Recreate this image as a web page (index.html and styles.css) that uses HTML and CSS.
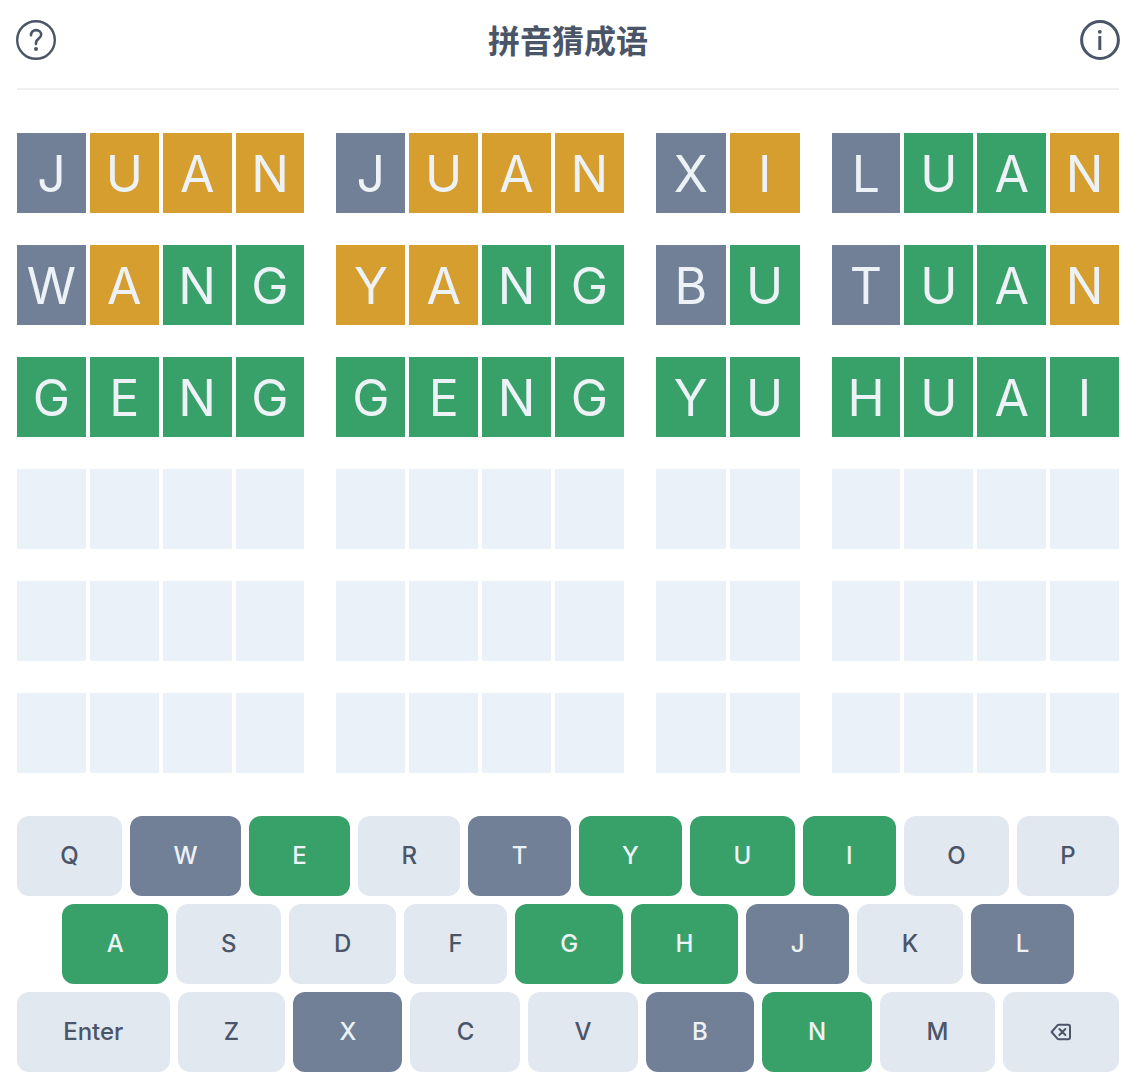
FILE: index.html
```html
<!DOCTYPE html>
<html lang="zh-CN">
<head>
<meta charset="utf-8">
<meta name="viewport" content="width=device-width, initial-scale=1">
<title>拼音猜成语</title>
<link rel="stylesheet" href="styles.css">
</head>
<body>
<header class="header">
  <button class="icon-button" type="button" aria-label="帮助">
    <svg class="icon" viewBox="0 0 40 40" fill="none" stroke="currentColor" stroke-width="2.4" stroke-linecap="round">
      <circle cx="20" cy="20" r="18.8"/>
      <path stroke-width="2.6" d="M15 15.2C15 12 17.200 10.100 20.100 10.100C23 10.100 25.200 12 25.200 14.600C25.200 16.700 24 17.800 22.400 18.900C20.800 20.100 20 21 20 22.700V24"/>
      <circle cx="20" cy="29" r="2" fill="currentColor" stroke="none"/>
    </svg>
  </button>
  <h1 class="title">拼音猜成语</h1>
  <button class="icon-button" type="button" aria-label="关于">
    <svg class="icon" viewBox="0 0 40 40" fill="none" stroke="currentColor" stroke-width="3">
      <circle cx="20" cy="20" r="18.4"/>
      <path d="M19.8 16V30"/>
      <circle cx="19.8" cy="11.8" r="1.9" fill="currentColor" stroke="none"/>
    </svg>
  </button>
</header>
<main class="game">
  <section class="board" aria-label="猜测">
    <div class="guess">
      <div class="word"><span class="tile absent">J</span><span class="tile present">U</span><span class="tile present">A</span><span class="tile present">N</span></div>
      <div class="word"><span class="tile absent">J</span><span class="tile present">U</span><span class="tile present">A</span><span class="tile present">N</span></div>
      <div class="word"><span class="tile absent">X</span><span class="tile present">I</span></div>
      <div class="word"><span class="tile absent">L</span><span class="tile correct">U</span><span class="tile correct">A</span><span class="tile present">N</span></div>
    </div>
    <div class="guess">
      <div class="word"><span class="tile absent">W</span><span class="tile present">A</span><span class="tile correct">N</span><span class="tile correct">G</span></div>
      <div class="word"><span class="tile present">Y</span><span class="tile present">A</span><span class="tile correct">N</span><span class="tile correct">G</span></div>
      <div class="word"><span class="tile absent">B</span><span class="tile correct">U</span></div>
      <div class="word"><span class="tile absent">T</span><span class="tile correct">U</span><span class="tile correct">A</span><span class="tile present">N</span></div>
    </div>
    <div class="guess">
      <div class="word"><span class="tile correct">G</span><span class="tile correct">E</span><span class="tile correct">N</span><span class="tile correct">G</span></div>
      <div class="word"><span class="tile correct">G</span><span class="tile correct">E</span><span class="tile correct">N</span><span class="tile correct">G</span></div>
      <div class="word"><span class="tile correct">Y</span><span class="tile correct">U</span></div>
      <div class="word"><span class="tile correct">H</span><span class="tile correct">U</span><span class="tile correct">A</span><span class="tile correct">I</span></div>
    </div>
    <div class="guess">
      <div class="word"><span class="tile"></span><span class="tile"></span><span class="tile"></span><span class="tile"></span></div>
      <div class="word"><span class="tile"></span><span class="tile"></span><span class="tile"></span><span class="tile"></span></div>
      <div class="word"><span class="tile"></span><span class="tile"></span></div>
      <div class="word"><span class="tile"></span><span class="tile"></span><span class="tile"></span><span class="tile"></span></div>
    </div>
    <div class="guess">
      <div class="word"><span class="tile"></span><span class="tile"></span><span class="tile"></span><span class="tile"></span></div>
      <div class="word"><span class="tile"></span><span class="tile"></span><span class="tile"></span><span class="tile"></span></div>
      <div class="word"><span class="tile"></span><span class="tile"></span></div>
      <div class="word"><span class="tile"></span><span class="tile"></span><span class="tile"></span><span class="tile"></span></div>
    </div>
    <div class="guess">
      <div class="word"><span class="tile"></span><span class="tile"></span><span class="tile"></span><span class="tile"></span></div>
      <div class="word"><span class="tile"></span><span class="tile"></span><span class="tile"></span><span class="tile"></span></div>
      <div class="word"><span class="tile"></span><span class="tile"></span></div>
      <div class="word"><span class="tile"></span><span class="tile"></span><span class="tile"></span><span class="tile"></span></div>
    </div>
  </section>
  <section class="keyboard" aria-label="键盘">
    <div class="key-row">
      <button class="key" type="button">Q</button>
      <button class="key absent" type="button">W</button>
      <button class="key correct" type="button">E</button>
      <button class="key" type="button">R</button>
      <button class="key absent" type="button">T</button>
      <button class="key correct" type="button">Y</button>
      <button class="key correct" type="button">U</button>
      <button class="key correct" type="button">I</button>
      <button class="key" type="button">O</button>
      <button class="key" type="button">P</button>
    </div>
    <div class="key-row key-row-inset">
      <button class="key correct" type="button">A</button>
      <button class="key" type="button">S</button>
      <button class="key" type="button">D</button>
      <button class="key" type="button">F</button>
      <button class="key correct" type="button">G</button>
      <button class="key correct" type="button">H</button>
      <button class="key absent" type="button">J</button>
      <button class="key" type="button">K</button>
      <button class="key absent" type="button">L</button>
    </div>
    <div class="key-row">
      <button class="key" type="button">Enter</button>
      <button class="key" type="button">Z</button>
      <button class="key absent" type="button">X</button>
      <button class="key" type="button">C</button>
      <button class="key" type="button">V</button>
      <button class="key absent" type="button">B</button>
      <button class="key correct" type="button">N</button>
      <button class="key" type="button">M</button>
      <button class="key" type="button" aria-label="退格">
        <svg class="key-icon" viewBox="0 0 24 24" fill="none" stroke="currentColor" stroke-width="2" stroke-linecap="round" stroke-linejoin="round">
          <path d="M10.400 9L16.400 15M16.400 9L10.400 15M2.600 12l5.800 6.600a2 2 0 001.500.7H19a2 2 0 002-2V6.700a2 2 0 00-2-2H9.900a2 2 0 00-1.500.7L2.600 12z"/>
        </svg>
      </button>
    </div>
  </section>
</main>
</body>
</html>
```
FILE: styles.css
```css
* {
  box-sizing: border-box;
}

body {
  margin: 0;
  background: #fff;
  color: #4a5568;
  font-family: Inter, "Noto Sans CJK SC", sans-serif;
}

.header {
  display: flex;
  align-items: center;
  justify-content: space-between;
  padding: 16px 14px 24px 16px;
}

.title {
  margin: 0;
  font-size: 32px;
  line-height: 46px;
  padding-bottom: 2px;
  font-weight: 700;
  font-family: "Noto Sans CJK SC", sans-serif;
}

.icon-button {
  display: flex;
  padding: 0;
  border: 0;
  background: none;
  color: inherit;
  cursor: pointer;
}

.icon {
  width: 40px;
  height: 40px;
}

.game {
  margin: 0 15px 0 17px;
  border-top: 2px solid #eeeff1;
  padding: 43px 0 18px;
}

.board {
  display: grid;
  gap: 32px;
}

.guess {
  display: grid;
  grid-template-columns: 2fr 2fr 1fr 2fr;
  gap: 32px;
}

.word {
  display: flex;
  gap: 4px;
}

.tile {
  flex: 1 1 0;
  height: 80px;
  background: #ebf1f8;
  color: #edf2f7;
  font-size: 50px;
  line-height: 82px;
  font-weight: 400;
  text-align: center;
}

.keyboard {
  display: grid;
  gap: 8px;
  margin-top: 43px;
}

.key-row {
  display: flex;
  gap: 8px;
}

.key-row-inset {
  padding: 0 45px;
}

.key {
  display: flex;
  flex: 1 1 auto;
  align-items: center;
  justify-content: center;
  height: 80px;
  padding: 0 24px 1px;
  border: 0;
  border-radius: 12px;
  background: #e2e8f0;
  color: #4a5568;
  font: inherit;
  font-size: 24px;
  font-weight: 500;
  cursor: pointer;
}

.key-icon {
  width: 24px;
  height: 24px;
}

.absent {
  background: #718096;
  color: #edf2f7;
}

.present {
  background: #d69e2e;
  color: #edf2f7;
}

.correct {
  background: #38a169;
  color: #edf2f7;
}
```
